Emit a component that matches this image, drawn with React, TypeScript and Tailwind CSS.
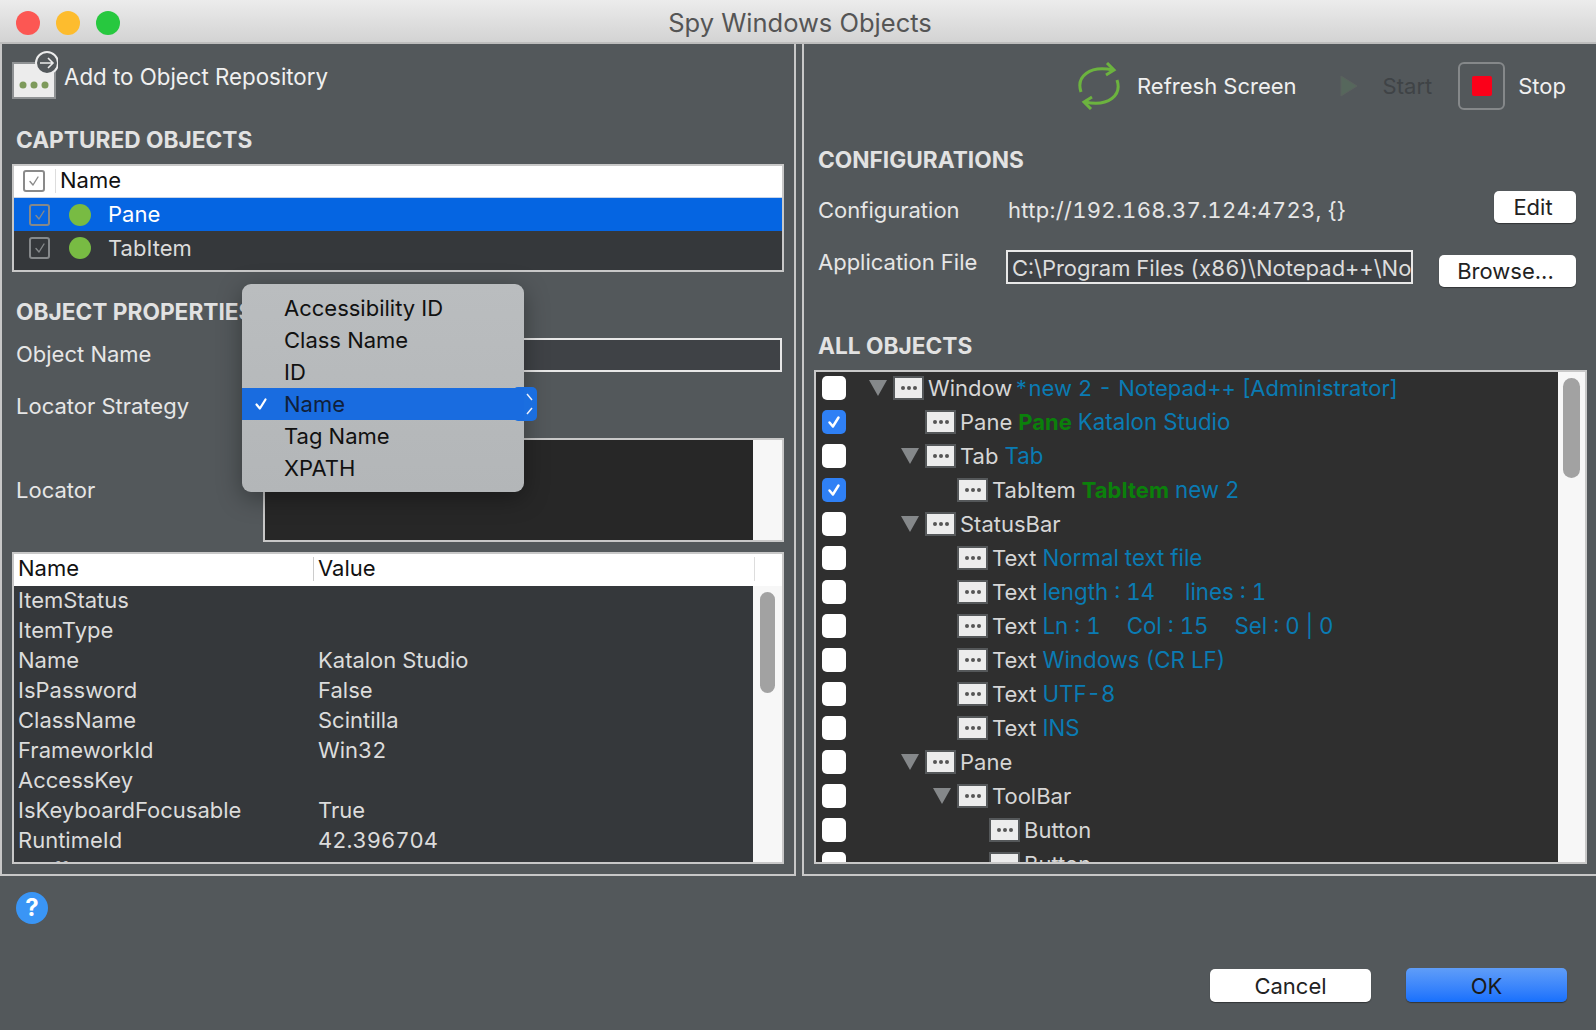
import React from 'react';

const FONT = 'font-["Inter","Noto_Sans",sans-serif]';

type Part = { t: string; c?: 'blue' | 'green' };
type TreeRow = { level: number; open?: boolean; checked?: boolean; name: string; parts?: Part[] };

const treeRows: TreeRow[] = [
  { level: 0, open: true, name: 'Window', parts: [{ t: '*new 2 - Notepad++ [Administrator]', c: 'blue' }] },
  { level: 1, checked: true, name: 'Pane', parts: [{ t: 'Pane', c: 'green' }, { t: 'Katalon Studio', c: 'blue' }] },
  { level: 1, open: true, name: 'Tab', parts: [{ t: 'Tab', c: 'blue' }] },
  { level: 2, checked: true, name: 'TabItem', parts: [{ t: 'TabItem', c: 'green' }, { t: 'new 2', c: 'blue' }] },
  { level: 1, open: true, name: 'StatusBar' },
  { level: 2, name: 'Text', parts: [{ t: 'Normal text file', c: 'blue' }] },
  { level: 2, name: 'Text', parts: [{ t: 'length : 14     lines : 1', c: 'blue' }] },
  { level: 2, name: 'Text', parts: [{ t: 'Ln : 1    \u200AC\u006Fl : 15    \u200ASel : 0 | 0', c: 'blue' }] },
  { level: 2, name: 'Text', parts: [{ t: 'Windows (CR LF)', c: 'blue' }] },
  { level: 2, name: 'Text', parts: [{ t: 'UTF-8', c: 'blue' }] },
  { level: 2, name: 'Text', parts: [{ t: 'INS', c: 'blue' }] },
  { level: 1, open: true, name: 'Pane' },
  { level: 2, open: true, name: 'ToolBar' },
  { level: 3, name: 'Button' },
  { level: 3, name: 'Button' },
];

const props: [string, string][] = [
  ['ItemStatus', ''],
  ['ItemType', ''],
  ['Name', 'Katalon Studio'],
  ['IsPassword', 'False'],
  ['ClassName', 'Scintilla'],
  ['FrameworkId', 'Win32'],
  ['AccessKey', ''],
  ['IsKeyboardFocusable', 'True'],
  ['RuntimeId', '42.396704'],
  ['IsOffscreen', 'False'],
];

const menuItems = ['Accessibility ID', 'Class Name', 'ID', 'Name', 'Tag Name', 'XPATH'];

function Tick({ className }: { className: string }) {
  return (
    <svg viewBox="0 0 16 16" className={className} fill="none" stroke="currentColor" strokeLinecap="round" strokeLinejoin="round">
      <path d="M4 8.5l3 3.5 5-8" />
    </svg>
  );
}

function TableCheck() {
  return (
    <span className="flex h-[22px] w-[21px] items-center justify-center rounded-[3px] border-2 border-[#85888a] text-[#85888a]">
      <Tick className="h-[16px] w-[16px] stroke-[1.4]" />
    </span>
  );
}

function DotsIcon() {
  return (
    <span className="flex h-[24px] w-[31px] shrink-0 items-center justify-center gap-[2px] border-2 border-[#55585a] bg-[#ececec]">
      <i className="h-[4px] w-[4px] rounded-full bg-[#555]" />
      <i className="h-[4px] w-[4px] rounded-full bg-[#555]" />
      <i className="h-[4px] w-[4px] rounded-full bg-[#555]" />
    </span>
  );
}

function Row({ row }: { row: TreeRow }) {
  return (
    <div className="flex h-[34px] shrink-0 items-center pl-[6px]">
      {row.checked ? (
        <span className="flex h-[24px] w-[24px] shrink-0 items-center justify-center rounded-[5px] bg-[#2f80f5] text-white">
          <Tick className="h-[18px] w-[18px] stroke-[2.2]" />
        </span>
      ) : (
        <span className="h-[24px] w-[24px] shrink-0 rounded-[5px] bg-white" />
      )}
      <div className={
        row.level === 0 ? 'w-[47px] shrink-0 pl-[23px]'
          : row.level === 1 ? 'w-[79px] shrink-0 pl-[55px]'
          : row.level === 2 ? 'w-[111px] shrink-0 pl-[87px]'
          : 'w-[143px] shrink-0 pl-[119px]'
      }>
        {row.open && (
          <svg viewBox="0 0 18 16" className="h-[16px] w-[18px]">
            <path d="M0 0h18L9 16z" fill="#85888a" />
          </svg>
        )}
      </div>
      <DotsIcon />
      <span className="ml-[4px] whitespace-pre text-[22px] text-[#d6d6d6]">{row.name}</span>
      {row.parts?.map((p, i) => (
        <span
          key={i}
          className={
            p.c === 'green'
              ? 'ml-[6px] whitespace-pre text-[22px] font-bold text-[#0b800b]'
              : row.level === 0
                ? 'ml-[2px] whitespace-pre text-[22px] tabular-nums text-[#0a7bb3]'
                : 'ml-[6px] whitespace-pre text-[22.3px] tabular-nums text-[#0a7bb3]'
          }
        >
          {p.t}
        </span>
      ))}
    </div>
  );
}

function Heading({ children, className }: { children: React.ReactNode; className: string }) {
  return <div className={`text-[22.7px] leading-[28px] font-bold text-[#e2e2e2] ${className}`}>{children}</div>;
}

function WhiteButton({ children, className }: { children: React.ReactNode; className: string }) {
  return (
    <button className={`flex items-center justify-center rounded-[5px] bg-white text-[22px] text-[#222] shadow-[0_1px_1px_rgba(0,0,0,0.4)] ${className}`}>
      {children}
    </button>
  );
}

export default function App() {
  return (
    <div className={`relative flex h-[1030px] w-[1596px] flex-col overflow-hidden bg-[#53585b] ${FONT}`}>
      {/* title bar */}
      <div className="relative flex h-[44px] shrink-0 items-center justify-center border-b-2 border-[#bdbdbd] bg-gradient-to-b from-[#ececec] to-[#d3d3d3] pt-[5px] pl-[4px]">
        <div className="absolute top-[11px] left-[16px] flex gap-[16px]">
          <span className="h-[24px] w-[24px] rounded-full bg-[#fc5753]" />
          <span className="h-[24px] w-[24px] rounded-full bg-[#fdbc2e]" />
          <span className="h-[24px] w-[24px] rounded-full bg-[#27c83f]" />
        </div>
        <span className="text-[25.5px] text-[#555]">Spy Windows Objects</span>
      </div>

      <div className="flex h-[832px] shrink-0">
        {/* left panel */}
        <div className="flex w-[796px] shrink-0 flex-col border-2 border-t-0 border-[#c8c8c8] px-[10px]">
          <div className="flex h-[82px] shrink-0 items-start pt-[6px]">
            <svg viewBox="0 0 46 50" className="h-[50px] w-[46px] shrink-0">
              <rect x="1" y="13" width="42" height="35" fill="#ececec" stroke="#8f9294" strokeWidth="2" />
              <circle cx="11" cy="35" r="3.5" fill="#7d9a5b" />
              <circle cx="22" cy="35" r="3.5" fill="#7d9a5b" />
              <circle cx="33" cy="35" r="3.5" fill="#7d9a5b" />
              <circle cx="35" cy="13" r="11" fill="#53585b" stroke="#ececec" strokeWidth="2" />
              <path d="M28 13h13M36 8l5 5-5 5" fill="none" stroke="#ececec" strokeWidth="1.6" />
            </svg>
            <span className="mt-[12px] ml-[6px] text-[22.3px] leading-[30px] text-[#f0f0f0]">Add to Object Repository</span>
          </div>

          <Heading className="pl-[4px]">CAPTURED OBJECTS</Heading>

          <div className="mt-[10px] flex h-[108px] shrink-0 flex-col border-2 border-[#c8c8c8] bg-[#35383b]">
            <div className="flex h-[32px] shrink-0 items-center border-b border-[#c8d4e8] bg-white pb-[2px] pl-[9px]">
              <span className="flex h-[22px] w-[22px] items-center justify-center rounded-[3px] border-2 border-[#8a8a8a] text-[#8a8a8a]">
                <Tick className="h-[16px] w-[16px] stroke-[1.4]" />
              </span>
              <span className="ml-[10px] h-[24px] border-l border-[#ddd]" />
              <span className="ml-[4px] text-[22px] text-[#111]">Name</span>
            </div>
            <div className="flex h-[33px] shrink-0 items-center bg-[#0565e2] pl-[15px] text-[22px] text-white">
              <TableCheck />
              <span className="ml-[19px] h-[22px] w-[22px] rounded-full bg-[#78bb43]" />
              <span className="ml-[17px]">Pane</span>
            </div>
            <div className="flex h-[35px] shrink-0 items-center pb-[1px] pl-[15px] text-[22px] text-[#dcdcdc]">
              <TableCheck />
              <span className="ml-[19px] h-[22px] w-[22px] rounded-full bg-[#78bb43]" />
              <span className="ml-[17px]">TabItem</span>
            </div>
          </div>

          <Heading className="mt-[26px] pl-[4px]">OBJECT PROPERTIES</Heading>

          <div className="mt-[12px] flex h-[34px] shrink-0 items-center">
            <span className="w-[251px] shrink-0 pb-[2px] pl-[4px] text-[22px] text-[#e6e6e6]">Object Name</span>
            <div className="mr-[2px] h-full flex-1 border-2 border-[#e8e8e8] bg-[#3f4246]" />
          </div>

          <div className="mt-[17px] flex h-[34px] shrink-0 items-center pl-[4px] text-[22px] text-[#e6e6e6]">Locator Strategy</div>

          <div className="mt-[15px] flex h-[104px] shrink-0 items-center">
            <span className="w-[251px] shrink-0 pl-[4px] text-[22px] text-[#e6e6e6]">Locator</span>
            <div className="flex h-full flex-1 border-2 border-[#c8c8c8] bg-[#272727]">
              <div className="flex-1" />
              <div className="w-[29px] bg-[#f7f7f7]" />
            </div>
          </div>

          <div className="mt-[10px] flex h-[312px] shrink-0 flex-col overflow-hidden border-2 border-[#c8c8c8] bg-[#35383b]">
            <div className="flex h-[32px] shrink-0 items-center bg-white pb-[3px] text-[22px] text-[#111]">
              <span className="w-[299px] shrink-0 pl-[4px]">Name</span>
              <span className="h-[24px] border-l border-[#ccc]" />
              <span className="ml-[4px] w-[436px] shrink-0">Value</span>
              <span className="h-[24px] border-l border-[#ddd]" />
            </div>
            <div className="flex min-h-0 flex-1">
              <div className="-mt-[1px] min-w-0 flex-1 overflow-hidden">
                {props.map(([k, v]) => (
                  <div key={k} className="flex h-[30px] items-center text-[22px] tabular-nums text-[#dcdcdc]">
                    <span className="w-[304px] shrink-0 pl-[4px]">{k}</span>
                    <span>{v}</span>
                  </div>
                ))}
              </div>
              <div className="w-[29px] shrink-0 bg-[#f7f7f7] px-[7px] pt-[6px]">
                <div className="h-[101px] rounded-full bg-[#a2a2a2]" />
              </div>
            </div>
          </div>
        </div>

        {/* right panel */}
        <div className="ml-[6px] flex w-[794px] shrink-0 flex-col border-b-2 border-l-2 border-[#c8c8c8]">
          <div className="flex h-[96px] shrink-0 items-start pt-[18px] pl-[273px] text-[22px]">
            <svg viewBox="0 0 44 48" className="h-[48px] w-[44px] shrink-0" fill="none" stroke="#6cb33f" strokeWidth="3">
              <path d="M4 30C-1 15 12 3 36 8" />
              <path d="M30 1l7 7-8 5" />
              <path d="M40 18c5 15-8 27-32 22" />
              <path d="M14 47l-7-7 8-5" />
            </svg>
            <span className="mt-[8px] ml-[16px] text-[#f0f0f0]">Refresh Screen</span>
            <svg viewBox="0 0 18 22" className="mt-[13px] ml-[43px] h-[22px] w-[18px] shrink-0">
              <path d="M1 1l16 10L1 21z" fill="#56675c" stroke="#5b625e" />
            </svg>
            <span className="mt-[8px] ml-[25px] text-[#3f4346]">Start</span>
            <span className="ml-[26px] flex h-[48px] w-[47px] shrink-0 items-center justify-center rounded-[6px] border-2 border-[#85888a]">
              <span className="h-[20px] w-[20px] rounded-[2px] bg-[#fb0019]" />
            </span>
            <span className="mt-[8px] ml-[13px] text-[#f0f0f0]">Stop</span>
          </div>

          <Heading className="mt-[6px] pl-[14px]">CONFIGURATIONS</Heading>

          <div className="mt-[17px] flex h-[32px] shrink-0 items-center text-[22px] text-[#e6e6e6]">
            <span className="w-[204px] shrink-0 pt-[6px] pl-[14px]">Configuration</span>
            <span className="pt-[6px] tracking-[0.3px] tabular-nums">http://192.168.37.124:4723, {'{}'}</span>
            <WhiteButton className="mr-[20px] ml-auto h-[32px] w-[82px] pt-[1px] pr-[4px]">Edit</WhiteButton>
          </div>

          <div className="mt-[27px] flex h-[37px] shrink-0 items-start text-[22px] text-[#e6e6e6]">
            <span className="-mt-[4px] w-[202px] shrink-0 pl-[14px]">Application File</span>
            <div className="flex h-[34px] w-[407px] shrink-0 items-center overflow-hidden border-2 border-[#e8e8e8] bg-[#3f4246] pt-[2px] pl-[4px] whitespace-nowrap tabular-nums text-[#dcdcdc]">
              {'C:\\Program Files (x86)\\Notepad++\\No'}
            </div>
            <WhiteButton className="mt-[5px] mr-[20px] ml-auto h-[32px] w-[137px] pt-[1px] pr-[4px]">Browse...</WhiteButton>
          </div>

          <Heading className="mt-[45px] pl-[14px]">ALL OBJECTS</Heading>

          <div className="mt-[10px] ml-[10px] flex h-[494px] w-[773px] shrink-0 overflow-hidden border-2 border-[#c8c8c8] bg-[#2f2f2f]">
            <div className="-mt-[1px] min-w-0 flex-1 overflow-hidden">
              {treeRows.map((r, i) => (
                <Row key={i} row={r} />
              ))}
            </div>
            <div className="w-[27px] shrink-0 bg-[#f7f7f7] px-[5px] pt-[6px]">
              <div className="h-[100px] rounded-full bg-[#a2a2a2]" />
            </div>
          </div>
        </div>
      </div>

      {/* footer */}
      <div className="relative flex-1">
        <span className="absolute top-[16px] left-[16px] flex h-[32px] w-[32px] items-center justify-center rounded-full bg-[#3a95f5] text-[24px] font-bold text-white">?</span>
        <div className="absolute top-[92px] left-[1210px] flex items-center gap-[35px]">
          <WhiteButton className="h-[33px] w-[161px] pt-[2px]">Cancel</WhiteButton>
          <button className="h-[34px] w-[161px] rounded-[5px] bg-gradient-to-b from-[#5f9df8] to-[#1770fd] pt-[2px] text-[22px] text-[#1a1a1a] shadow-[0_1px_1px_rgba(0,0,0,0.4)]">OK</button>
        </div>
      </div>

      {/* open dropdown of locator strategy */}
      <div className="absolute top-[284px] left-[242px] h-[208px] w-[282px] rounded-[9px] bg-gradient-to-b from-[#babdbf] to-[#b3b6b8] py-[8px] shadow-[0_6px_24px_rgba(0,0,0,0.35)]">
        <div className="absolute top-[103px] -right-[13px] flex h-[34px] w-[24px] items-center justify-end rounded-[5px] bg-[#1a6ee0] pr-[4px]">
          <svg viewBox="0 0 7 22" className="h-[22px] w-[7px]" fill="none" stroke="#e8eefc" strokeWidth="1.5">
            <path d="M1 1l5 6M6 15l-5 6" />
          </svg>
        </div>
        {menuItems.map((item) => (
          <div
            key={item}
            className={
              item === 'Name'
                ? 'relative flex h-[32px] items-center bg-[#196ce0] pl-[42px] text-[22px] text-[#10203a]'
                : 'flex h-[32px] items-center pl-[42px] text-[22px] text-[#111]'
            }
          >
            {item === 'Name' && (
              <Tick className="absolute top-[7px] left-[10px] h-[18px] w-[18px] stroke-[2] text-white" />
            )}
            {item}
          </div>
        ))}
      </div>
    </div>
  );
}
